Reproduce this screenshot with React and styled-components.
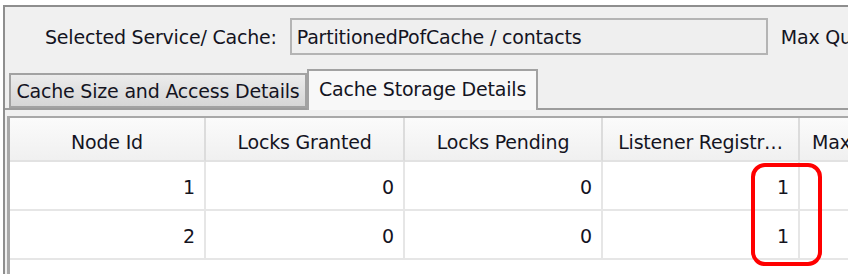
import styled, { createGlobalStyle } from 'styled-components'

const GlobalStyle = createGlobalStyle`
  html, body {
    margin: 0;
    padding: 0;
    background: #ffffff;
  }
  body {
    font-family: "DejaVu Sans", Verdana, sans-serif;
    color: #14141f;
  }
`

const columns = [
    { key: 'node', title: 'Node Id' },
    { key: 'granted', title: 'Locks Granted' },
    { key: 'pending', title: 'Locks Pending' },
    { key: 'listener', title: 'Listener Registr\u2026' },
    { key: 'max', title: 'Max Query Duration' },
]

const rows = [
    { node: 1, granted: 0, pending: 0, listener: 1, max: '' },
    { node: 2, granted: 0, pending: 0, listener: 1, max: '' },
]

const App = () => {
    return (
        <>
            <GlobalStyle />
            <Page>
                <Window>
                    <TopBar>
                        <Label>Selected Service/ Cache:</Label>
                        <Field>PartitionedPofCache / contacts</Field>
                        <Label>Max Query Duration (ms):</Label>
                    </TopBar>

                    <TabStrip>
                        <Tab width={298}>Cache Size and Access Details</Tab>
                        <Tab active width={231}>Cache Storage Details</Tab>
                    </TabStrip>

                    <TablePanel>
                        <Grid>
                            {columns.map((c) => (
                                <HeadCell key={c.key}>{c.title}</HeadCell>
                            ))}
                            {rows.map((r) =>
                                columns.map((c) => (
                                    <Cell key={r.node + c.key}>{r[c.key]}</Cell>
                                ))
                            )}
                        </Grid>
                        <Highlight />
                    </TablePanel>
                </Window>
            </Page>
        </>
    )
}

const Page = styled.div`
    padding: 5px 0 0 3px;
    width: 845px;
    height: 269px;
`

const Window = styled.div`
    height: 100%;
    background: #f0f0f0;
    border-top: 2px solid #8e8e8e;
    border-left: 2px solid #8e8e8e;
    display: flex;
    flex-direction: column;
    overflow: hidden;
    font-size: 19px;
    letter-spacing: -0.2px;
`

const TopBar = styled.div`
    display: flex;
    align-items: center;
    gap: 13px;
    height: 37px;
    padding: 11px 0 0 40px;
    white-space: nowrap;
`

const Label = styled.span`
    flex-shrink: 0;
`

const Field = styled.div`
    flex-shrink: 0;
    box-sizing: border-box;
    width: 478px;
    height: 37px;
    padding: 0 5px;
    display: flex;
    align-items: center;
    background: #efefef;
    border: 2px solid #b4b4b4;
`

const Tab = styled.div`
    box-sizing: border-box;
    display: flex;
    align-items: center;
    justify-content: center;
    width: ${({ width }) => width}px;
    height: ${({ active }) => (active ? '41px' : '35px')};
    margin-bottom: ${({ active }) => (active ? '-2px' : '0')};
    padding-bottom: ${({ active }) => (active ? '4px' : '0')};
    white-space: nowrap;
    border: 2px solid #a2a2a2;
    border-bottom: ${({ active }) => (active ? 'none' : '2px solid #a2a2a2')};
    background: ${({ active }) =>
        active ? '#f8f8f8' : 'linear-gradient(#ececec, #d6d6d6)'};
`

const TabStrip = styled.div`
    display: flex;
    align-items: flex-end;
    height: 39px;
    margin-top: 14px;
    padding-left: 4px;
    border-bottom: 2px solid #9c9c9c;
`

const TablePanel = styled.div`
    position: relative;
    flex: 1;
    margin: 6px 0 0 2px;
    background: #ffffff;
    border-top: 2px solid #a8a8a8;
    border-left: 3px solid #a8a8a8;
`

const Grid = styled.div`
    display: grid;
    grid-template-columns: 196px 199px 198px 197px max-content;
    grid-template-rows: 44px;
    grid-auto-rows: 49px;
`

const HeadCell = styled.div`
    display: flex;
    align-items: center;
    justify-content: center;
    padding: 5px 12px 0;
    white-space: nowrap;
    overflow: hidden;
    background: linear-gradient(#fbfbfb, #f0f0f0);
    border-right: 2px solid #dcdcdc;
    border-bottom: 2px solid #e2e2e2;
`

const Cell = styled.div`
    display: flex;
    align-items: center;
    justify-content: flex-end;
    padding: 3px 9px 0 0;
    border-right: 2px solid #e6e6e6;
    border-bottom: 2px solid #e6e6e6;
`

const Highlight = styled.div`
    position: absolute;
    left: 741px;
    top: 45px;
    width: 71px;
    height: 103px;
    box-sizing: border-box;
    border: 4px solid #ff0000;
    border-radius: 14px;
    pointer-events: none;
`

export default App
